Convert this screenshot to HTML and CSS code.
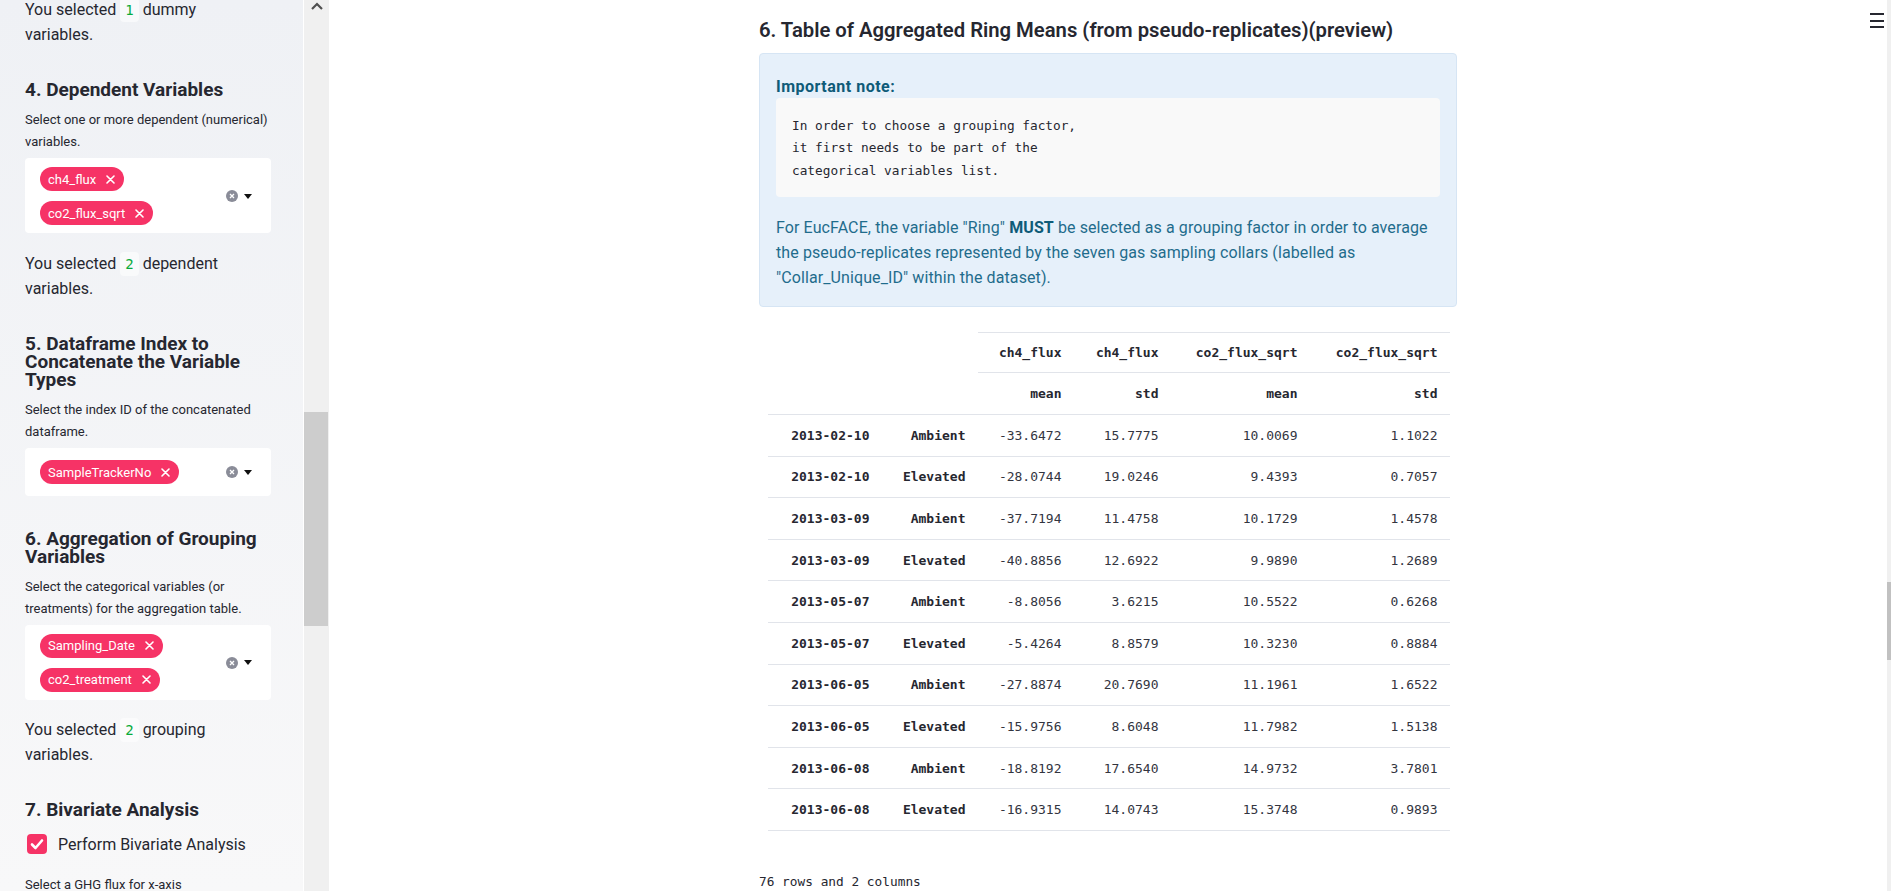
FILE: index.html
```html
<!DOCTYPE html>
<html lang="en">
<head>
<meta charset="utf-8">
<title>EucFACE</title>
<link rel="stylesheet" href="styles.css">
</head>
<body>
<div class="app">
  <aside class="sidebar">
    <div class="sb-content">
      <p class="sb-text">You selected <code class="badge">1</code> dummy<br>variables.</p>

      <h3 class="sb-h">4. Dependent Variables</h3>
      <p class="sb-cap">Select one or more dependent (numerical) variables.</p>
      <div class="ms">
        <div class="chips">
          <span class="chip">ch4_flux<svg width="9" height="9" viewBox="0 0 9 9"><path d="M1 1L8 8M8 1L1 8" stroke="#fff" stroke-width="1.6" stroke-linecap="round"/></svg></span>
          <span class="chip">co2_flux_sqrt<svg width="9" height="9" viewBox="0 0 9 9"><path d="M1 1L8 8M8 1L1 8" stroke="#fff" stroke-width="1.6" stroke-linecap="round"/></svg></span>
        </div>
        <div class="ms-ctrl">
          <svg width="12" height="12" viewBox="0 0 12 12"><circle cx="6" cy="6" r="6" fill="#8a8c98"/><path d="M4 4L8 8M8 4L4 8" stroke="#fff" stroke-width="1.3"/></svg>
          <svg width="8" height="5" viewBox="0 0 8 5"><path d="M0 0H8L4 5Z" fill="#111"/></svg>
        </div>
      </div>
      <p class="sb-text">You selected <code class="badge">2</code> dependent variables.</p>

      <h3 class="sb-h">5. Dataframe Index to Concatenate the Variable Types</h3>
      <p class="sb-cap">Select the index ID of the concatenated dataframe.</p>
      <div class="ms">
        <div class="chips">
          <span class="chip">SampleTrackerNo<svg width="9" height="9" viewBox="0 0 9 9"><path d="M1 1L8 8M8 1L1 8" stroke="#fff" stroke-width="1.6" stroke-linecap="round"/></svg></span>
        </div>
        <div class="ms-ctrl">
          <svg width="12" height="12" viewBox="0 0 12 12"><circle cx="6" cy="6" r="6" fill="#8a8c98"/><path d="M4 4L8 8M8 4L4 8" stroke="#fff" stroke-width="1.3"/></svg>
          <svg width="8" height="5" viewBox="0 0 8 5"><path d="M0 0H8L4 5Z" fill="#111"/></svg>
        </div>
      </div>

      <h3 class="sb-h">6. Aggregation of Grouping Variables</h3>
      <p class="sb-cap">Select the categorical variables (or treatments) for the aggregation table.</p>
      <div class="ms">
        <div class="chips">
          <span class="chip">Sampling_Date<svg width="9" height="9" viewBox="0 0 9 9"><path d="M1 1L8 8M8 1L1 8" stroke="#fff" stroke-width="1.6" stroke-linecap="round"/></svg></span>
          <span class="chip">co2_treatment<svg width="9" height="9" viewBox="0 0 9 9"><path d="M1 1L8 8M8 1L1 8" stroke="#fff" stroke-width="1.6" stroke-linecap="round"/></svg></span>
        </div>
        <div class="ms-ctrl">
          <svg width="12" height="12" viewBox="0 0 12 12"><circle cx="6" cy="6" r="6" fill="#8a8c98"/><path d="M4 4L8 8M8 4L4 8" stroke="#fff" stroke-width="1.3"/></svg>
          <svg width="8" height="5" viewBox="0 0 8 5"><path d="M0 0H8L4 5Z" fill="#111"/></svg>
        </div>
      </div>
      <p class="sb-text">You selected <code class="badge">2</code> grouping variables.</p>

      <h3 class="sb-h">7. Bivariate Analysis</h3>
      <label class="cb-row">
        <span class="cb"><svg width="20" height="20" viewBox="0 0 20 20"><path d="M5 10.5L8.5 14L15 6.5" fill="none" stroke="#fff" stroke-width="2.6" stroke-linecap="round" stroke-linejoin="round"/></svg></span>
        <span>Perform Bivariate Analysis</span>
      </label>
      <p class="sb-cap sb-last">Select a GHG flux for x-axis</p>
    </div>
  </aside>

  <div class="sb-scroll">
    <svg class="sb-arrow" width="12" height="8" viewBox="0 0 12 8"><path d="M1 7L6 2L11 7" fill="none" stroke="#505050" stroke-width="2.2"/></svg>
    <div class="sb-thumb"></div>
  </div>

  <main class="main">
    <div class="block">
      <h2 class="title">6. Table of Aggregated Ring Means (from pseudo-replicates)(preview)</h2>
      <div class="info">
        <p class="info-h">Important note:</p>
        <pre class="code">In order to choose a grouping factor,
it first needs to be part of the
categorical variables list.</pre>
        <p class="info-p">For EucFACE, the variable "Ring" <b>MUST</b> be selected as a grouping factor in order to average<br>the pseudo-replicates represented by the seven gas sampling collars (labelled as<br>"Collar_Unique_ID" within the dataset).</p>
      </div>

      <table class="tbl">
        <colgroup>
          <col class="c-date"><col class="c-trt"><col class="c-n1"><col class="c-n2"><col class="c-n3"><col class="c-n4">
        </colgroup>
        <thead>
          <tr class="h1">
            <th class="blank"></th><th class="blank"></th>
            <th>ch4_flux</th><th>ch4_flux</th><th>co2_flux_sqrt</th><th>co2_flux_sqrt</th>
          </tr>
          <tr class="h2">
            <th></th><th></th>
            <th>mean</th><th>std</th><th>mean</th><th>std</th>
          </tr>
        </thead>
        <tbody>
          <tr><th>2013-02-10</th><th>Ambient</th><td>-33.6472</td><td>15.7775</td><td>10.0069</td><td>1.1022</td></tr>
          <tr><th>2013-02-10</th><th>Elevated</th><td>-28.0744</td><td>19.0246</td><td>9.4393</td><td>0.7057</td></tr>
          <tr><th>2013-03-09</th><th>Ambient</th><td>-37.7194</td><td>11.4758</td><td>10.1729</td><td>1.4578</td></tr>
          <tr><th>2013-03-09</th><th>Elevated</th><td>-40.8856</td><td>12.6922</td><td>9.9890</td><td>1.2689</td></tr>
          <tr><th>2013-05-07</th><th>Ambient</th><td>-8.8056</td><td>3.6215</td><td>10.5522</td><td>0.6268</td></tr>
          <tr><th>2013-05-07</th><th>Elevated</th><td>-5.4264</td><td>8.8579</td><td>10.3230</td><td>0.8884</td></tr>
          <tr><th>2013-06-05</th><th>Ambient</th><td>-27.8874</td><td>20.7690</td><td>11.1961</td><td>1.6522</td></tr>
          <tr><th>2013-06-05</th><th>Elevated</th><td>-15.9756</td><td>8.6048</td><td>11.7982</td><td>1.5138</td></tr>
          <tr><th>2013-06-08</th><th>Ambient</th><td>-18.8192</td><td>17.6540</td><td>14.9732</td><td>3.7801</td></tr>
          <tr><th>2013-06-08</th><th>Elevated</th><td>-16.9315</td><td>14.0743</td><td>15.3748</td><td>0.9893</td></tr>
        </tbody>
      </table>

      <p class="foot">76 rows and 2 columns</p>
    </div>

    <button class="menu" aria-label="Main menu"><span></span><span></span><span></span></button>
  </main>

  <div class="main-scroll"><div class="main-thumb"></div></div>
</div>
</body>
</html>
```
FILE: styles.css
```css
* { box-sizing: border-box; }

html, body {
  margin: 0;
  padding: 0;
  height: 891px;
  overflow: hidden;
}

body {
  font-family: Roboto, "Liberation Sans", sans-serif;
  color: #262730;
  background: #ffffff;
}

.app {
  display: flex;
  height: 891px;
}

/* ---------- Sidebar ---------- */
.sidebar {
  width: 304px;
  flex: none;
  background: linear-gradient(180deg, #eff1f5 0%, #f8f8f9 100%);
  border-right: 1px solid #ffffff;
  overflow: hidden;
}

.sb-content {
  padding: 0 32px 0 25px;
  margin-top: -3px;
}

.sb-text {
  margin: 17.5px 0 0;
  font-size: 16px;
  line-height: 25px;
}

.sb-content > .sb-text:first-child { margin-top: 0; }

.badge {
  display: inline-block;
  font-family: "DejaVu Sans Mono", "Liberation Mono", monospace;
  font-size: 14px;
  line-height: 18px;
  color: #09ab3b;
  background: rgba(255, 255, 255, 0.55);
  padding: 3px 5px;
  border-radius: 4px;
}

.sb-h {
  margin: 34px 0 10px;
  font-size: 19px;
  line-height: 18px;
  font-weight: 700;
  color: #262730;
}

.sb-cap {
  margin: 0 0 5px;
  font-size: 13px;
  line-height: 22px;
}

.sb-last { margin-top: 18px; }

.ms {
  display: flex;
  align-items: center;
  min-height: 48px;
  padding: 9px 19px 8px 15px;
  background: #ffffff;
  border-radius: 4px;
}

.chips {
  flex: 1;
  display: flex;
  flex-direction: column;
  align-items: flex-start;
  gap: 10px;
}

.chip {
  display: inline-flex;
  align-items: center;
  gap: 10px;
  height: 24px;
  padding: 0 9px 0 8px;
  border-radius: 12px;
  background: #f63366;
  color: #ffffff;
  font-size: 13px;
}

.ms-ctrl {
  display: flex;
  align-items: center;
  gap: 6px;
}

.ms-ctrl svg { display: block; }

.cb-row {
  display: flex;
  align-items: center;
  gap: 11px;
  height: 24px;
  margin-top: 13px;
  padding-left: 2px;
  font-size: 16px;
}

.cb {
  width: 20px;
  height: 20px;
  border-radius: 4px;
  background: #f63366;
}

.cb svg { display: block; }

/* sidebar scrollbar */
.sb-scroll {
  width: 25px;
  flex: none;
  background: #f0f0f0;
  display: flex;
  flex-direction: column;
  align-items: center;
}

.sb-arrow {
  display: block;
  margin-top: 2px;
}

.sb-thumb {
  align-self: flex-start;
  width: 24px;
  height: 214px;
  margin-top: 402px;
  background: #cdcdcd;
}

/* ---------- Main ---------- */
.main {
  flex: 1;
  position: relative;
  display: flex;
  justify-content: center;
  overflow: hidden;
}

.block {
  width: 698px;
  padding-top: 15px;
}

.title {
  margin: 0 0 8px;
  font-size: 20.25px;
  line-height: 30px;
  font-weight: 600;
  color: #262730;
}

.info {
  background: #e6f0fa;
  border: 1px solid #d6e5f4;
  border-radius: 4px;
  padding: 21px 16px 16.5px;
  color: #1f6c8c;
}

.info-h {
  margin: 0;
  font-size: 16px;
  line-height: 23px;
  font-weight: 700;
  letter-spacing: 0.5px;
  color: #0f5b78;
}

.code {
  margin: 0;
  padding: 16.5px 16px 15px;
  background: #f9f9f9;
  border-radius: 4px;
  font-family: "DejaVu Sans Mono", "Liberation Mono", monospace;
  font-size: 12.75px;
  line-height: 22.5px;
  color: #262730;
}

.info-p {
  margin: 17.5px 0 0;
  font-size: 16px;
  line-height: 25px;
  letter-spacing: 0.1px;
  white-space: nowrap;
}

.info-p b { color: #0f5b78; }

/* table */
.tbl {
  width: 682px;
  margin: 25px 0 0 8.5px;
  border-collapse: separate;
  border-spacing: 0;
  table-layout: fixed;
  font-family: "DejaVu Sans Mono", "Liberation Mono", monospace;
  font-size: 13px;
}

.c-date { width: 114px; }
.c-trt { width: 96px; }
.c-n1 { width: 96px; }
.c-n2 { width: 97px; }
.c-n3 { width: 139px; }
.c-n4 { width: 140px; }

.tbl th,
.tbl td {
  padding: 0 12px;
  text-align: right;
  vertical-align: middle;
  white-space: nowrap;
  border-bottom: 1px solid #e1e4ea;
}

.tbl th { font-weight: 700; color: #262730; }
.tbl td { font-weight: 400; color: #33353f; }

.tbl tr.h1 { height: 41px; }
.tbl tr.h1 th { border-top: 1px solid #e1e4ea; }
.tbl tr.h1 th.blank { border-top: 0; border-bottom: 0; }
.tbl tr.h2 { height: 42px; }
.tbl tbody tr { height: 41.6px; }

.foot {
  margin: 42.5px 0 0;
  font-family: "DejaVu Sans Mono", "Liberation Mono", monospace;
  font-size: 12.8px;
  line-height: 18px;
  color: #262730;
}

/* hamburger */
.menu {
  position: absolute;
  top: 13px;
  right: 3px;
  display: flex;
  flex-direction: column;
  gap: 4.5px;
  padding: 0;
  border: 0;
  background: transparent;
}

.menu span {
  display: block;
  width: 14px;
  height: 2px;
  background: #262730;
}

/* main scrollbar */
.main-scroll {
  width: 4px;
  flex: none;
  background: #f0f0f0;
}

.main-thumb {
  width: 4px;
  height: 78px;
  margin-top: 582px;
  background: #c1c1c1;
}
```
